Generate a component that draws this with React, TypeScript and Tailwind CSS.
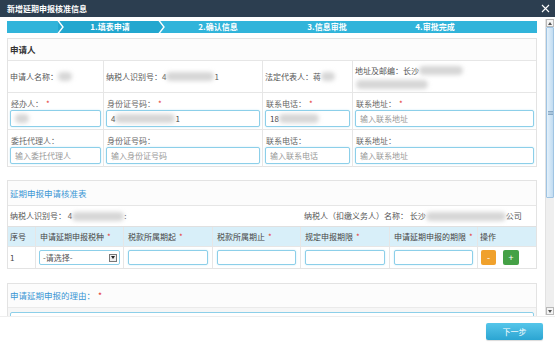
import React from "react";

const Blur = ({ w, h = 9 }: { w: number; h?: number }) => (
  <span
    className="inline-block align-middle rounded-full bg-[#d6d6d6] blur-[2px] shrink-0"
    style={{ width: w, height: h }}
  />
);

const Star = () => <span className="text-[#e53935] ml-[3px]">*</span>;

const Box = ({ children, w, placeholder }: { children?: React.ReactNode; w?: number; placeholder?: string }) => (
  <div
    className="h-[17px] border border-[#8ccfe9] rounded-[2px] shadow-[0_0_2px_#c7e9f6] bg-white px-[4px] flex items-center text-[8px] text-[#444] overflow-hidden whitespace-nowrap"
    style={w ? { width: w } : undefined}
  >
    {placeholder ? <span className="text-[#999]">{placeholder}</span> : children}
  </div>
);

const InfoCell = ({ label, star, children, last }: { label: string; star?: boolean; children: React.ReactNode; last?: boolean }) => (
  <div className={`flex flex-col pt-[6px] pb-[3px] px-[2px] ${last ? "" : "border-r border-[#e6e6e6]"}`}>
    <div className="text-[8px] leading-[9px] text-[#666] mb-[2px] pl-[1px]">
      {label}
      {star && <Star />}
    </div>
    {children}
  </div>
);

export default function App() {
  const font = { fontFamily: '"Noto Sans CJK SC", "Noto Sans", sans-serif' };
  return (
    <div className="w-[555px] h-[346px] bg-white overflow-hidden flex flex-col" style={font}>
      {/* Title bar */}
      <div className="h-[17px] bg-[#2c3e50] flex items-center justify-between pl-[7px] pr-[5px] shrink-0">
        <span className="text-white text-[8px] font-bold">新增延期申报核准信息</span>
        <svg width="9" height="9" viewBox="0 0 9 9">
          <path d="M1 1 L8 8 M8 1 L1 8" stroke="#fff" strokeWidth="1.1" />
        </svg>
      </div>

      <div className="flex h-[299px] shrink-0">
        {/* Scroll content */}
        <div className="w-[545px] h-[299px] overflow-hidden pl-[7px] pr-[8px] pt-[4px]">
          {/* Step bar */}
          <div className="relative h-[12px] bg-[#31b4da] flex text-white text-[8px] leading-[12px] font-bold">
            <div className="w-[53px]" />
            <div className="w-[100px] bg-[#22a7cf] text-center">1.填表申请</div>
            <div className="w-[116px] text-center">2.确认信息</div>
            <div className="w-[102px] text-center">3.信息审批</div>
            <div className="w-[114px] text-center">4.审批完成</div>
            <svg className="absolute left-[50px] top-0" width="8" height="12" viewBox="0 0 8 12">
              <path d="M1 -0.5 L6 6 L1 12.5" stroke="#fff" strokeWidth="1.4" fill="#22a7cf" />
            </svg>
            <svg className="absolute left-[150px] top-0" width="8" height="12" viewBox="0 0 8 12">
              <path d="M0 0 L3 0 L7 6 L3 12 L0 12 Z" fill="#22a7cf" />
              <path d="M2 -0.5 L7 6 L2 12.5" stroke="#fff" strokeWidth="1.4" fill="none" />
            </svg>
          </div>

          {/* Card 1 */}
          <div className="mt-[5px] border border-[#e3e3e3] bg-white">
            <div className="h-[22px] flex items-center pl-[2px] bg-[#fcfcfc] border-b border-[#e6e6e6] text-[8.5px] font-bold text-[#333]">
              申请人
            </div>
            <div className="grid grid-cols-[96px_159px_90px_183px] h-[32px] border-b border-[#e6e6e6] text-[8px] text-[#555]">
              <div className="flex items-center pl-[2px] border-r border-[#e6e6e6]">
                申请人名称：<Blur w={14} />
              </div>
              <div className="flex items-center pl-[2px] border-r border-[#e6e6e6]">
                纳税人识别号：4<Blur w={48} />1
              </div>
              <div className="flex items-center pl-[2px] border-r border-[#e6e6e6]">
                法定代表人：蒋<Blur w={14} />
              </div>
              <div className="flex flex-col justify-center pl-[2px] gap-[3px]">
                <div className="flex items-center">
                  地址及邮编：长沙<Blur w={44} />
                </div>
                <div className="flex items-center pl-[1px]">
                  <Blur w={72} />
                </div>
              </div>
            </div>
            <div className="grid grid-cols-[96px_159px_90px_183px] h-[37px] border-b border-[#e6e6e6]">
              <InfoCell label="经办人：" star>
                <Box>
                  <Blur w={14} />
                </Box>
              </InfoCell>
              <InfoCell label="身份证号码：" star>
                <Box>
                  4<Blur w={60} />1
                </Box>
              </InfoCell>
              <InfoCell label="联系电话：" star>
                <Box>
                  18<Blur w={40} />
                </Box>
              </InfoCell>
              <InfoCell label="联系地址：" star last>
                <Box placeholder="输入联系地址" />
              </InfoCell>
            </div>
            <div className="grid grid-cols-[96px_159px_90px_183px] h-[36px]">
              <InfoCell label="委托代理人：">
                <Box placeholder="输入委托代理人" />
              </InfoCell>
              <InfoCell label="身份证号码：">
                <Box placeholder="输入身份证号码" />
              </InfoCell>
              <InfoCell label="联系电话：">
                <Box placeholder="输入联系电话" />
              </InfoCell>
              <InfoCell label="联系地址：" last>
                <Box placeholder="输入联系地址" />
              </InfoCell>
            </div>
          </div>

          {/* Card 2 */}
          <div className="mt-[13px] border border-[#e3e3e3] bg-white">
            <div className="h-[25px] flex items-center pl-[2px] bg-[#fcfcfc] border-b border-[#e6e6e6] text-[8.5px] text-[#3a96d4]">
              延期申报申请核准表
            </div>
            <div className="h-[20px] flex items-center text-[8px] text-[#555] whitespace-nowrap">
              <div className="w-[293px] shrink-0 pl-[2px] flex items-center">
                纳税人识别号： 4<Blur w={52} />:
              </div>
              <div className="flex items-center pl-[3px]">
                纳税人（扣缴义务人）名称： 长沙<Blur w={80} />公司
              </div>
            </div>
            <div className="grid grid-cols-[28px_88px_89px_88px_89px_88px_58px] h-[20px] bg-[#d8eff9] text-[8px] text-[#444] border-t border-[#e0e0e0] whitespace-nowrap">
              <div className="flex items-center pl-[2px] border-r border-[#e6e6e6]">序号</div>
              <div className="flex items-center pl-[4px] border-r border-[#e6e6e6]">
                申请延期申报税种<Star />
              </div>
              <div className="flex items-center pl-[4px] border-r border-[#e6e6e6]">
                税款所属期起<Star />
              </div>
              <div className="flex items-center pl-[4px] border-r border-[#e6e6e6]">
                税款所属期止<Star />
              </div>
              <div className="flex items-center pl-[4px] border-r border-[#e6e6e6]">
                规定申报期限<Star />
              </div>
              <div className="flex items-center pl-[4px] border-r border-[#e6e6e6]">
                申请延期申报的期限<Star />
              </div>
              <div className="flex items-center pl-[2px]">操作</div>
            </div>
            <div className="grid grid-cols-[28px_88px_89px_88px_89px_88px_58px] h-[22px] text-[8px] text-[#444] border-t border-[#e6e6e6]">
              <div className="flex items-center pl-[2px] border-r border-[#e6e6e6]">1</div>
              <div className="flex items-center px-[3px] border-r border-[#e6e6e6]">
                <div className="w-full h-[15px] border border-[#8ccfe9] rounded-[2px] bg-white flex items-center justify-between pl-[3px] pr-[2px]">
                  <span className="text-[#555]">-请选择-</span>
                  <span className="w-[8px] h-[8px] border border-[#777] bg-[#eee] flex items-center justify-center">
                    <svg width="4" height="3" viewBox="0 0 4 3">
                      <path d="M0 0 L4 0 L2 3 Z" fill="#222" />
                    </svg>
                  </span>
                </div>
              </div>
              {[0, 1, 2, 3].map((i) => (
                <div key={i} className="flex items-center px-[4px] border-r border-[#e6e6e6]">
                  <div className="w-full h-[15px] border border-[#8ccfe9] rounded-[2px] bg-white shadow-[0_0_2px_#c7e9f6]" />
                </div>
              ))}
              <div className="flex items-center pl-[3px] gap-[7px]">
                <div className="w-[15px] h-[15px] rounded-[2px] bg-[#f0a12c] text-white flex items-center justify-center text-[9px] leading-none">
                  -
                </div>
                <div className="w-[16px] h-[15px] rounded-[2px] bg-[#45a146] text-white flex items-center justify-center text-[9px] leading-none">
                  +
                </div>
              </div>
            </div>
          </div>

          {/* Card 3 */}
          <div className="mt-[14px] border border-[#e3e3e3] bg-white">
            <div className="h-[24px] flex items-center pl-[2px] bg-[#fcfcfc] border-b border-[#eaeaea] text-[8.5px] text-[#3a96d4]">
              申请延期申报的理由：<Star />
            </div>
            <div className="bg-[#f6f6f6] pt-[4px] px-[2px]">
              <div className="h-[30px] border border-[#8ccfe9] rounded-[2px] bg-white" />
            </div>
          </div>
        </div>

        {/* Scrollbar */}
        <div className="w-[9px] mt-[2px] mb-[1px] flex flex-col bg-[#efefef] border-l border-[#e2e2e2]">
          <div className="h-[8px] border border-[#b8b8b8] bg-[#f4f4f4] flex items-center justify-center">
            <svg width="4" height="3" viewBox="0 0 4 3">
              <path d="M0 3 L4 3 L2 0 Z" fill="#555" />
            </svg>
          </div>
          <div className="h-[171px] border border-[#9fc4e3] rounded-[1px] bg-gradient-to-r from-[#e4f1fb] to-[#c2dcf1] flex items-center justify-center">
            <svg width="5" height="4" viewBox="0 0 5 4">
              <path d="M0 0.5 H5 M0 2 H5 M0 3.5 H5" stroke="#6a8fb0" strokeWidth="0.7" />
            </svg>
          </div>
          <div className="flex-1" />
          <div className="h-[8px] border border-[#b8b8b8] bg-[#f4f4f4] flex items-center justify-center">
            <svg width="4" height="3" viewBox="0 0 4 3">
              <path d="M0 0 L4 0 L2 3 Z" fill="#555" />
            </svg>
          </div>
        </div>
        <div className="w-[1px]" />
      </div>

      {/* Footer */}
      <div className="flex-1 bg-white border-t border-[#eeeeee] flex justify-end items-start pt-[6px] pr-[12px]">
        <div className="w-[57px] h-[17px] rounded-[2px] bg-gradient-to-b from-[#55c6ea] to-[#2aa5d2] text-white text-[8px] flex items-center justify-center shadow-[0_1px_1px_rgba(0,0,0,0.15)]">
          下一步
        </div>
      </div>
    </div>
  );
}
